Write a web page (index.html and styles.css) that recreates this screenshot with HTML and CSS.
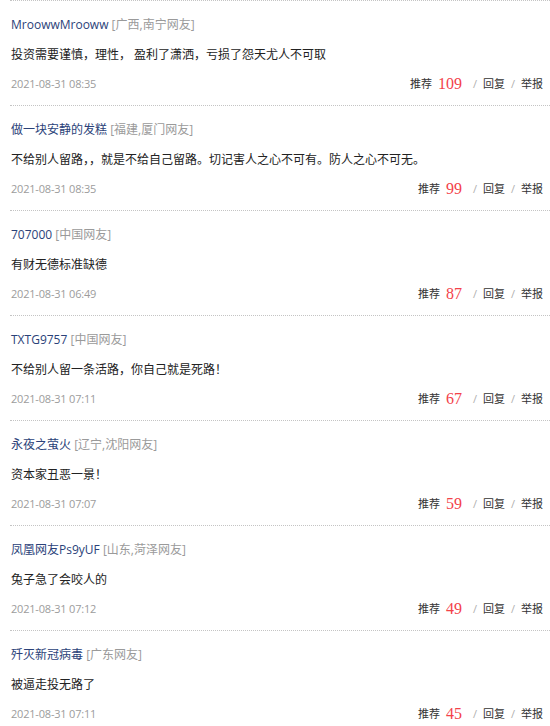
FILE: index.html
```html
<!DOCTYPE html>
<html lang="zh-CN">
<head>
<meta charset="utf-8">
<title>评论</title>
<link rel="stylesheet" href="styles.css">
</head>
<body>
<div class="list">
  <div class="item">
    <div class="user"><span class="name">MroowwMrooww</span> <span class="loc">[广西,南宁网友]</span></div>
    <div class="text">投资需要谨慎，理性， 盈利了潇洒，亏损了怨天尤人不可取</div>
    <div class="foot"><span class="date">2021-08-31 08:35</span><span class="acts"><span>推荐</span><span class="num">109</span><span class="sep">/</span><span>回复</span><span class="sep">/</span><span>举报</span></span></div>
  </div>
  <div class="item">
    <div class="user"><span class="name">做一块安静的发糕</span> <span class="loc">[福建,厦门网友]</span></div>
    <div class="text">不给别人留路，，就是不给自己留路。切记害人之心不可有。防人之心不可无。</div>
    <div class="foot"><span class="date">2021-08-31 08:35</span><span class="acts"><span>推荐</span><span class="num">99</span><span class="sep">/</span><span>回复</span><span class="sep">/</span><span>举报</span></span></div>
  </div>
  <div class="item">
    <div class="user"><span class="name">707000</span> <span class="loc">[中国网友]</span></div>
    <div class="text">有财无德标准缺德</div>
    <div class="foot"><span class="date">2021-08-31 06:49</span><span class="acts"><span>推荐</span><span class="num">87</span><span class="sep">/</span><span>回复</span><span class="sep">/</span><span>举报</span></span></div>
  </div>
  <div class="item">
    <div class="user"><span class="name">TXTG9757</span> <span class="loc">[中国网友]</span></div>
    <div class="text">不给别人留一条活路，你自己就是死路！</div>
    <div class="foot"><span class="date">2021-08-31 07:11</span><span class="acts"><span>推荐</span><span class="num">67</span><span class="sep">/</span><span>回复</span><span class="sep">/</span><span>举报</span></span></div>
  </div>
  <div class="item">
    <div class="user"><span class="name">永夜之萤火</span> <span class="loc">[辽宁,沈阳网友]</span></div>
    <div class="text">资本家丑恶一景！</div>
    <div class="foot"><span class="date">2021-08-31 07:07</span><span class="acts"><span>推荐</span><span class="num">59</span><span class="sep">/</span><span>回复</span><span class="sep">/</span><span>举报</span></span></div>
  </div>
  <div class="item">
    <div class="user"><span class="name">凤凰网友Ps9yUF</span> <span class="loc">[山东,菏泽网友]</span></div>
    <div class="text">兔子急了会咬人的</div>
    <div class="foot"><span class="date">2021-08-31 07:12</span><span class="acts"><span>推荐</span><span class="num">49</span><span class="sep">/</span><span>回复</span><span class="sep">/</span><span>举报</span></span></div>
  </div>
  <div class="item">
    <div class="user"><span class="name">歼灭新冠病毒</span> <span class="loc">[广东网友]</span></div>
    <div class="text">被逼走投无路了</div>
    <div class="foot"><span class="date">2021-08-31 07:11</span><span class="acts"><span>推荐</span><span class="num">45</span><span class="sep">/</span><span>回复</span><span class="sep">/</span><span>举报</span></span></div>
  </div>
</div>
</body>
</html>
```

FILE: styles.css
```css
html, body {
  margin: 0;
  padding: 0;
  background: #fff;
}
body {
  font-family: "Open Sans", "Noto Sans CJK SC", sans-serif;
  font-size: 12px;
  color: #333;
}
.list {
  padding-left: 10px;
}
.item {
  border-top: 1px dotted #c4c4c4;
  padding: 14px 7px 11px 1px;
  display: flex;
  flex-direction: column;
}
.user {
  line-height: 20px;
  height: 20px;
}
.name {
  color: #2b4279;
}
.loc {
  color: #9a9a9a;
}
.text {
  margin-top: 10px;
  line-height: 20px;
  height: 20px;
  color: #222;
}
.foot {
  margin-top: 9px;
  height: 20px;
  line-height: 20px;
  display: flex;
  justify-content: space-between;
  align-items: center;
}
.date {
  color: #9c9c9c;
  font-size: 11px;
  letter-spacing: -0.2px;
}
.acts {
  display: flex;
  align-items: center;
  font-size: 11px;
  color: #333;
}
.num {
  font-family: "Liberation Serif", "DejaVu Serif", serif;
  font-size: 16px;
  color: #f3424a;
  margin: 0 5px 0 6px;
}
.sep {
  color: #b0b0b0;
  margin: 0 6px;
}
```
